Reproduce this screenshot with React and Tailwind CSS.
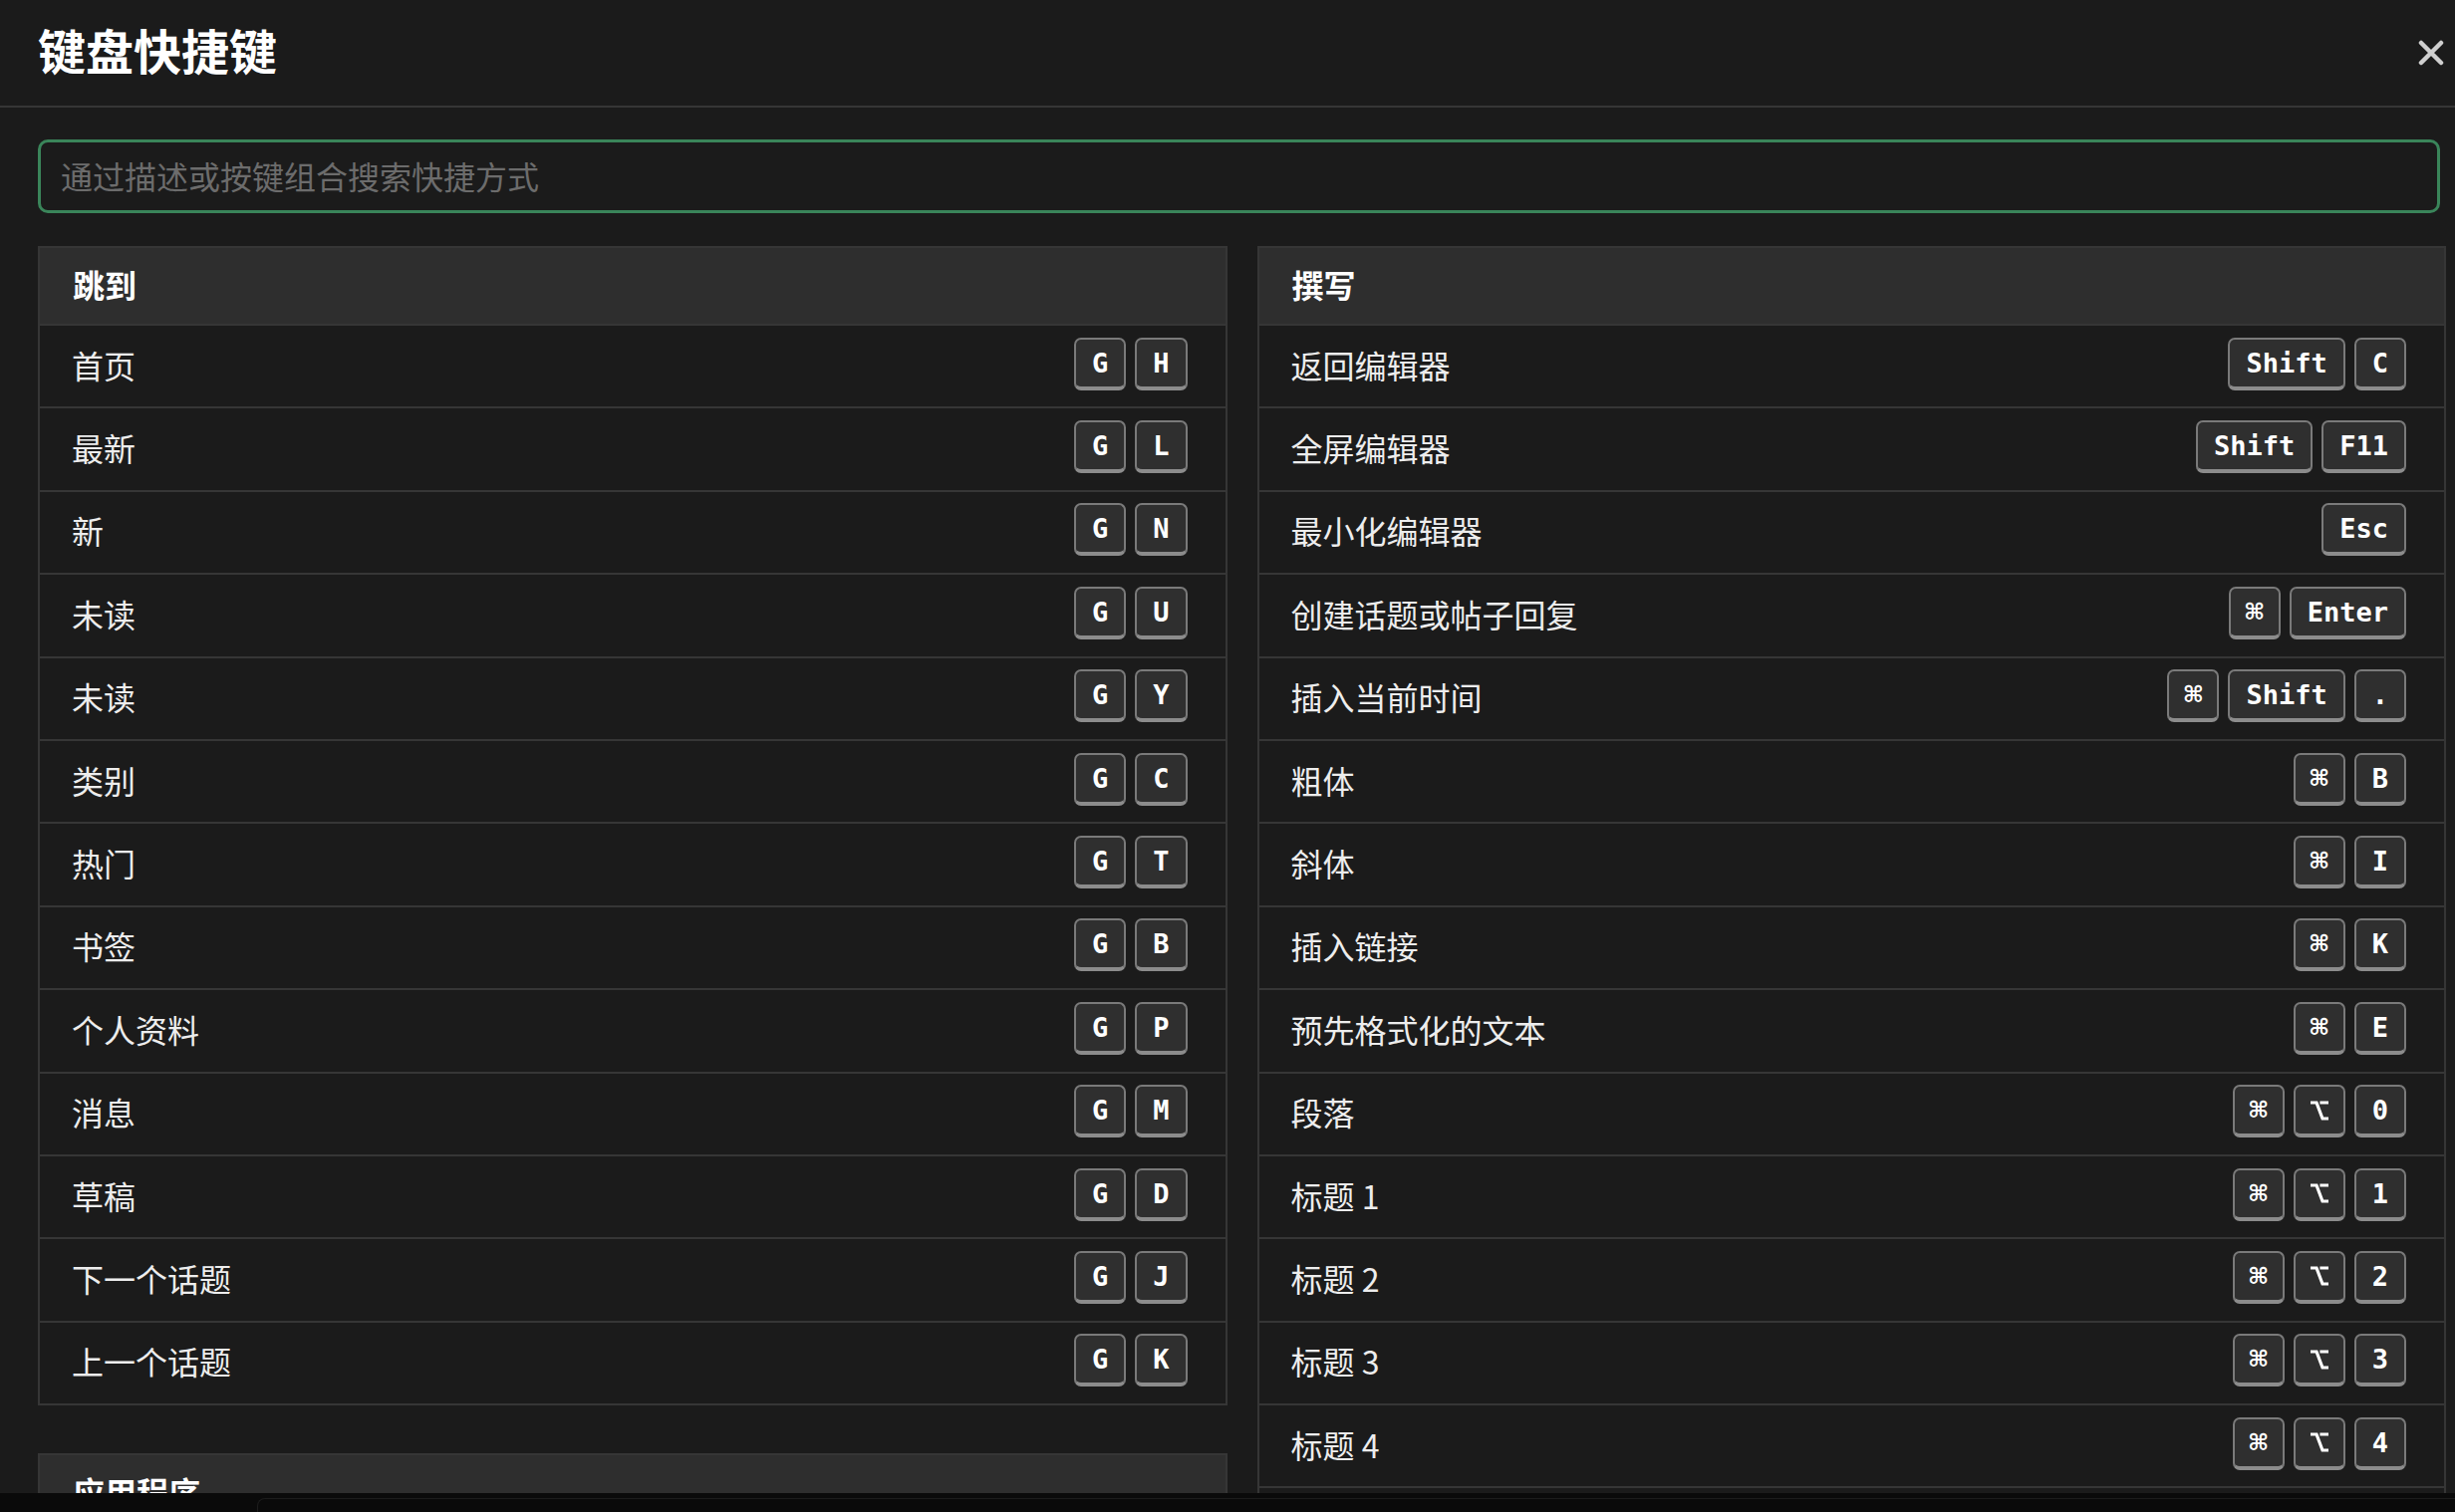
const navigation = [
  { label: '首页', keys: ['G', 'H'] },
  { label: '最新', keys: ['G', 'L'] },
  { label: '新', keys: ['G', 'N'] },
  { label: '未读', keys: ['G', 'U'] },
  { label: '未读', keys: ['G', 'Y'] },
  { label: '类别', keys: ['G', 'C'] },
  { label: '热门', keys: ['G', 'T'] },
  { label: '书签', keys: ['G', 'B'] },
  { label: '个人资料', keys: ['G', 'P'] },
  { label: '消息', keys: ['G', 'M'] },
  { label: '草稿', keys: ['G', 'D'] },
  { label: '下一个话题', keys: ['G', 'J'] },
  { label: '上一个话题', keys: ['G', 'K'] },
];

const application = [
  { label: '创建新话题', keys: ['C'] },
  { label: '通知', keys: ['N'] },
  { label: '汉堡菜单', keys: ['='] },
];

const composing = [
  { label: '返回编辑器', keys: ['Shift', 'C'] },
  { label: '全屏编辑器', keys: ['Shift', 'F11'] },
  { label: '最小化编辑器', keys: ['Esc'] },
  { label: '创建话题或帖子回复', keys: ['⌘', 'Enter'] },
  { label: '插入当前时间', keys: ['⌘', 'Shift', '.'] },
  { label: '粗体', keys: ['⌘', 'B'] },
  { label: '斜体', keys: ['⌘', 'I'] },
  { label: '插入链接', keys: ['⌘', 'K'] },
  { label: '预先格式化的文本', keys: ['⌘', 'E'] },
  { label: '段落', keys: ['⌘', '⌥', '0'] },
  { label: '标题 1', keys: ['⌘', '⌥', '1'] },
  { label: '标题 2', keys: ['⌘', '⌥', '2'] },
  { label: '标题 3', keys: ['⌘', '⌥', '3'] },
  { label: '标题 4', keys: ['⌘', '⌥', '4'] },
  { label: '标题 5', keys: ['⌘', '⌥', '5'] },
  { label: '标题 6', keys: ['⌘', '⌥', '6'] },
];

const OptionGlyph = () => (
  <svg width="18" height="20" viewBox="0 0 18 20" fill="none" stroke="currentColor" strokeWidth="3.2" strokeLinecap="square">
    <path d="M1 2H6L12 18H17M11 2H17" />
  </svg>
);

const keyBase =
  "h-[53px] flex items-center justify-center rounded-[7px] border-2 border-b-[4px] border-[#7a7a7a] border-b-[#8c8c8c] bg-[#2f2f2f] text-white text-[27px] font-bold font-['DejaVu_Sans_Mono','Liberation_Mono',monospace] leading-none";

const Key = ({ children }) => {
  if (children === '⌥') {
    return (
      <kbd className={`${keyBase} w-[52px]`}>
        <OptionGlyph />
      </kbd>
    );
  }
  if (children === '⌘') {
    return (
      <kbd className={`${keyBase} w-[52px]`}>
        <span className="text-[23px] font-['DejaVu_Sans',sans-serif]">⌘</span>
      </kbd>
    );
  }
  return <kbd className={`${keyBase} min-w-[52px] px-[16px]`}>{children}</kbd>;
};

const ShortcutPanel = ({ title, items }) => (
  <section className="border-2 border-[#363636]">
    <h2 className="h-[78px] flex items-center pl-[33px] bg-[#2e2e2e] border-b-2 border-[#363636] text-[32px] font-bold text-white leading-none">
      <span className="mb-[4px]">{title}</span>
    </h2>
    <ul>
      {items.map((item, i) => (
        <li
          key={i}
          className="h-[83.4px] flex items-center justify-between pl-[32px] pr-[38px] border-b-2 border-[#363636] last:border-b-0 last:h-[81.4px]"
        >
          <span className="text-[32px] text-[#ededed] leading-none mb-[4px]">{item.label}</span>
          <div className="flex gap-[9px] mb-[5px]">
            {item.keys.map((k, j) => (
              <Key key={j}>{k}</Key>
            ))}
          </div>
        </li>
      ))}
    </ul>
  </section>
);

const App = () => {
  return (
    <div className="h-[1518px] overflow-hidden bg-[#1b1b1b] flex flex-col font-['Noto_Sans_CJK_SC','Noto_Sans',sans-serif]">
      <div className="flex-1 min-h-0 overflow-hidden">
        <header className="h-[108px] flex items-center justify-between pl-[38px] pr-[11px] border-b-2 border-[#363636]">
          <h1 className="text-[48px] font-bold text-white leading-none mb-[8px]">键盘快捷键</h1>
          <button className="text-[#cfcfcf]">
            <svg width="26" height="26" viewBox="0 0 26 26" fill="none" stroke="currentColor" strokeWidth="4.5" strokeLinecap="round">
              <path d="M3 3L23 23M23 3L3 23" />
            </svg>
          </button>
        </header>

        <div className="pl-[38px] pr-[9px] pt-[32px]">
          <div className="mr-[6px]">
            <input
              type="text"
              placeholder="通过描述或按键组合搜索快捷方式"
              className="w-full h-[74px] px-[20px] pb-[3px] rounded-[10px] border-[3px] border-[#3a855a] bg-[#1b1b1b] text-[32px] text-white outline-none placeholder:text-[#6c6c6c]"
            />
          </div>

          <div className="grid grid-cols-2 gap-[30px] mt-[33px] items-start">
            <div className="flex flex-col gap-[48px]">
              <ShortcutPanel title="跳到" items={navigation} />
              <ShortcutPanel title="应用程序" items={application} />
            </div>
            <div className="flex flex-col gap-[48px]">
              <ShortcutPanel title="撰写" items={composing} />
            </div>
          </div>
        </div>
      </div>

      <div className="h-[19px] shrink-0 bg-[#0a0a0a] pl-[258px] pt-[5px]">
        <div className="h-full rounded-tl-[8px] border-t border-l border-[#1c1c1c]" />
      </div>
    </div>
  );
};

export default App;
